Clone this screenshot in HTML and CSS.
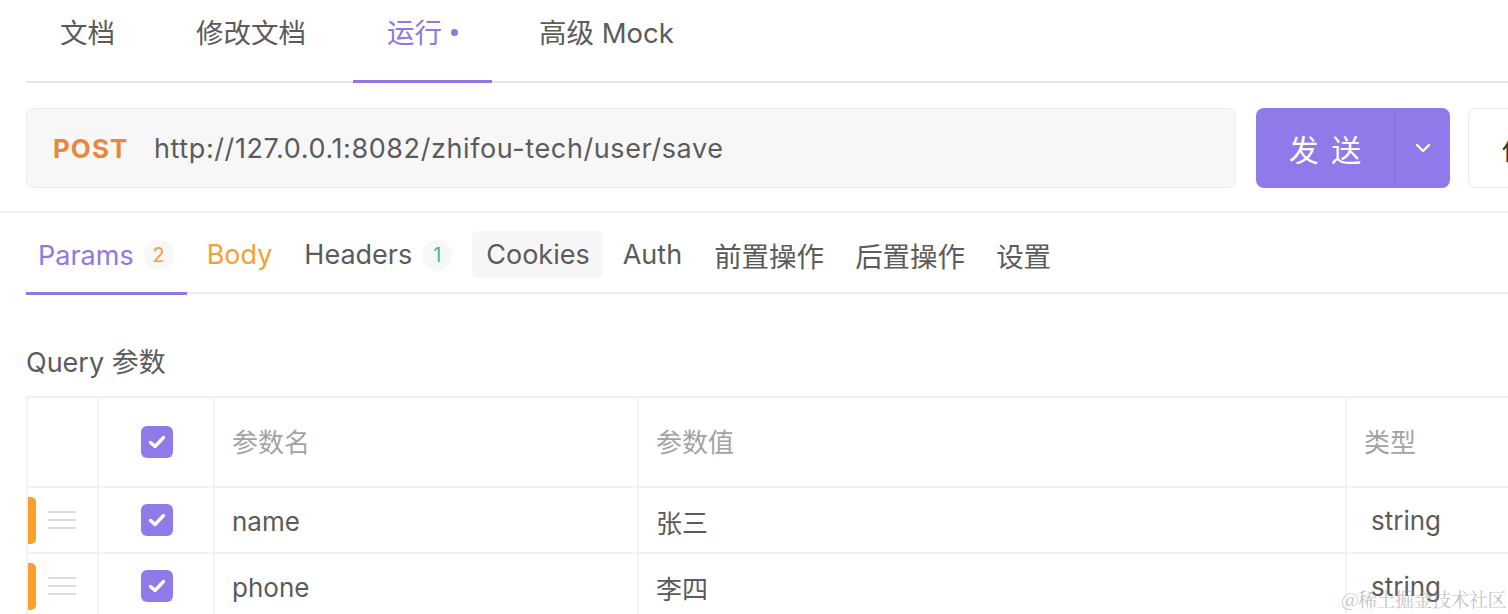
FILE: index.html
```html
<!DOCTYPE html>
<html lang="zh">
<head>
<meta charset="utf-8">
<title>运行</title>
<link rel="stylesheet" href="styles.css">
</head>
<body>
<div class="page">
  <nav class="top-tabs">
    <div class="top-tab">文档</div>
    <div class="top-tab">修改文档</div>
    <div class="top-tab active">运行<span class="dot"></span></div>
    <div class="top-tab">高级 Mock</div>
  </nav>

  <div class="req-row">
    <div class="url-box">
      <span class="method">POST</span>
      <span class="url">http://127.0.0.1:8082/zhifou-tech/user/save</span>
    </div>
    <div class="send-btn">
      <span class="send-label">发 送</span>
      <span class="send-more">
        <svg width="16" height="10" viewBox="0 0 16 10"><path d="M2 2 L8 8 L14 2" fill="none" stroke="#fff" stroke-width="2.4" stroke-linecap="round" stroke-linejoin="round"/></svg>
      </span>
    </div>
    <div class="save-btn">保存</div>
  </div>
</div>

<div class="divider"></div>

<div class="page">
  <nav class="sub-tabs">
    <div class="sub-tab active">Params<span class="badge orange">2</span></div>
    <div class="sub-tab body">Body</div>
    <div class="sub-tab">Headers<span class="badge green">1</span></div>
    <div class="sub-tab hover">Cookies</div>
    <div class="sub-tab">Auth</div>
    <div class="sub-tab cjk">前置操作</div>
    <div class="sub-tab cjk">后置操作</div>
    <div class="sub-tab cjk">设置</div>
  </nav>

  <h2 class="section-title">Query 参数</h2>

  <div class="table">
    <div class="cell head"></div>
    <div class="cell head center"><span class="check"><svg width="22" height="18" viewBox="0 0 22 18"><path d="M4.5 9.5 L9 13.5 L17.5 4.5" fill="none" stroke="#fff" stroke-width="3.4" stroke-linecap="round" stroke-linejoin="round"/></svg></span></div>
    <div class="cell head label">参数名</div>
    <div class="cell head label">参数值</div>
    <div class="cell head label">类型</div>

    <div class="cell lead"><span class="bar"></span><span class="handle"><i></i><i></i><i></i></span></div>
    <div class="cell center"><span class="check"><svg width="22" height="18" viewBox="0 0 22 18"><path d="M4.5 9.5 L9 13.5 L17.5 4.5" fill="none" stroke="#fff" stroke-width="3.4" stroke-linecap="round" stroke-linejoin="round"/></svg></span></div>
    <div class="cell text">name</div>
    <div class="cell text">张三</div>
    <div class="cell text type">string</div>

    <div class="cell lead"><span class="bar"></span><span class="handle"><i></i><i></i><i></i></span></div>
    <div class="cell center"><span class="check"><svg width="22" height="18" viewBox="0 0 22 18"><path d="M4.5 9.5 L9 13.5 L17.5 4.5" fill="none" stroke="#fff" stroke-width="3.4" stroke-linecap="round" stroke-linejoin="round"/></svg></span></div>
    <div class="cell text">phone</div>
    <div class="cell text">李四</div>
    <div class="cell text type">string</div>
  </div>
</div>

<div class="watermark">@稀土掘金技术社区</div>
</body>
</html>
```

FILE: styles.css
```css
html, body {
  margin: 0;
  padding: 0;
  width: 1508px;
  height: 614px;
  overflow: hidden;
  background: #fff;
}
body {
  font-family: Inter, "Noto Sans CJK SC", sans-serif;
  color: #5b5b5b;
  position: relative;
}
.page {
  padding-left: 26px;
  width: 1600px;
}

/* top tabs */
.top-tabs {
  display: flex;
  gap: 13px;
  height: 81px;
  border-bottom: 2px solid #e6e6e6;
}
.top-tab {
  padding: 0 34px;
  height: 66px;
  line-height: 66px;
  font-size: 27.5px;
  color: #5b5b5b;
  display: flex;
  align-items: center;
}
.top-tab.active {
  color: #8f78e6;
  box-sizing: border-box;
  border-bottom: 3px solid #8f78e6;
  margin-bottom: -2px;
  height: 83px;
  align-items: flex-start;
}
.top-tab.active .dot {
  width: 7px;
  height: 7px;
  border-radius: 50%;
  background: #8f78e6;
  margin: 29px 0 0 9px;
}

/* request row */
.req-row {
  display: flex;
  margin-top: 25px;
  gap: 20px;
}
.url-box {
  width: 1210px;
  height: 80px;
  box-sizing: border-box;
  background: #f7f7f7;
  border: 1px solid #ebebeb;
  border-radius: 8px;
  display: flex;
  align-items: center;
  padding-left: 26px;
  font-size: 26px;
}
.method {
  color: #e8883e;
  font-weight: 700;
  width: 101px;
  letter-spacing: 1px;
}
.url {
  color: #5b5b5b;
  font-size: 27px;
  letter-spacing: 0.6px;
}
.send-btn {
  width: 194px;
  height: 80px;
  background: #9079e8;
  border-radius: 8px;
  display: flex;
  color: #fff;
}
.send-label {
  width: 139px;
  display: flex;
  align-items: center;
  justify-content: center;
  font-size: 30px;
  letter-spacing: 2px;
  padding-left: 2px;
  box-sizing: border-box;
  border-right: 1px solid rgba(0, 0, 0, 0.1);
  white-space: pre;
}
.send-more {
  flex: 1;
  display: flex;
  align-items: center;
  justify-content: center;
}
.save-btn {
  margin-left: -2px;
  width: 120px;
  height: 80px;
  box-sizing: border-box;
  border: 1px solid #e8e8e8;
  border-radius: 8px;
  padding-left: 33px;
  display: flex;
  align-items: center;
  font-size: 26px;
  color: #333;
}

.divider {
  margin-top: 23px;
  height: 2px;
  background: #efefef;
}

/* sub tabs */
.sub-tabs {
  display: flex;
  gap: 8px;
  height: 79px;
  border-bottom: 2px solid #eeeeee;
  align-items: center;
}
.sub-tab {
  height: 47px;
  padding: 0 12px;
  display: flex;
  align-items: center;
  font-size: 27px;
  color: #5b5b5b;
  border-radius: 6px;
  position: relative;
  margin-top: 4px;
}
.sub-tab.cjk { font-size: 27.5px; padding: 0 11px 0 12px; }
.sub-tab.active {
  color: #8f78e6;
  margin-top: 0;
  box-sizing: border-box;
  border-radius: 0;
  padding-top: 4px;
  border-bottom: 3px solid #8f78e6;
  margin-bottom: -4px;
  height: 81px;
  padding-right: 13px;
}
.sub-tab.body { color: #f5a033; }
.sub-tab.hover { background: #f6f6f6; padding: 0 13px 0 14px; }
.badge {
  margin-left: 10px;
  width: 30px;
  height: 30px;
  border-radius: 50%;
  background: #f7f7f7;
  font-size: 20px;
  display: flex;
  align-items: center;
  justify-content: center;
}
.badge.orange { color: #f0a040; }
.badge.green { color: #3cc08a; }

.section-title {
  margin: 52px 0 0;
  font-weight: 400;
  font-size: 27px;
  line-height: 34px;
  color: #5b5b5b;
}

/* table */
.table {
  margin-top: 16px;
  display: grid;
  grid-template-columns: 71px 116px 424px 708px 240px;
  grid-template-rows: 90px 66px 66px;
  border-top: 2px solid #f2f2f2;
  border-left: 2px solid #f2f2f2;
}
.cell {
  border-right: 2px solid #f2f2f2;
  border-bottom: 2px solid #f2f2f2;
  display: flex;
  align-items: center;
  font-size: 26px;
}
.cell.center { justify-content: center; padding-left: 2px; }
.cell.label {
  color: #a3a3a3;
  padding-left: 17px;
  padding-bottom: 4px;
}
.cell.text { padding-left: 17px; padding-top: 3px; color: #5b5b5b; }
.cell.type { padding-left: 24px; padding-top: 0; }
.check {
  width: 32px;
  height: 32px;
  border-radius: 6px;
  background: #9079e8;
  display: flex;
  align-items: center;
  justify-content: center;
}
.cell.lead { gap: 12px; }
.bar {
  width: 8px;
  height: 47px;
  background: #fba12a;
  border-radius: 0 5px 5px 0;
}
.handle {
  width: 28px;
  display: flex;
  flex-direction: column;
  gap: 6px;
}
.handle i {
  display: block;
  height: 2px;
  background: #dcdcdc;
}

.watermark {
  position: absolute;
  right: 2px;
  bottom: 2px;
  font-family: "Noto Serif CJK SC", "Noto Sans CJK SC", serif;
  font-size: 19px;
  color: rgba(140, 140, 140, 0.55);
  letter-spacing: -0.5px;
}
```
